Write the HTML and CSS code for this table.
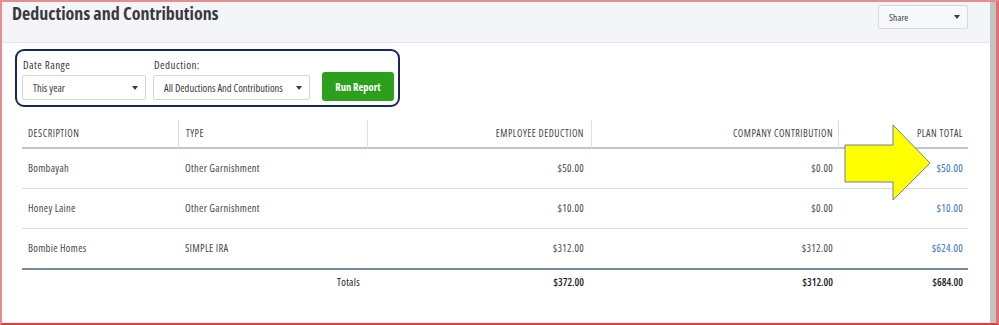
FILE: index.html
```html
<!DOCTYPE html>
<html>
<head>
<meta charset="utf-8">
<link rel="stylesheet" href="styles.css">
</head>
<body>
<div class="frame">
  <div class="main">
    <header class="topbar">
      <h1 class="title">Deductions and Contributions</h1>
      <div class="share">
        <span>Share</span>
        <svg class="caret" width="6" height="4" viewBox="0 0 6 4"><polygon points="0,0 6,0 3,4" fill="#393a3d"/></svg>
      </div>
    </header>
    <section class="content">
      <div class="filters">
        <div class="field">
          <label class="label">Date Range</label>
          <div class="select sel-date">
            <span>This year</span>
            <svg class="caret" width="6" height="4" viewBox="0 0 6 4"><polygon points="0,0 6,0 3,4" fill="#393a3d"/></svg>
          </div>
        </div>
        <div class="field">
          <label class="label">Deduction:</label>
          <div class="select sel-ded">
            <span>All Deductions And Contributions</span>
            <svg class="caret" width="6" height="4" viewBox="0 0 6 4"><polygon points="0,0 6,0 3,4" fill="#393a3d"/></svg>
          </div>
        </div>
        <button class="run">Run Report</button>
      </div>
      <table class="report">
        <colgroup>
          <col class="c-desc"><col class="c-type"><col class="c-emp"><col class="c-comp"><col class="c-plan">
        </colgroup>
        <thead>
          <tr>
            <th class="left">DESCRIPTION</th>
            <th class="left">TYPE</th>
            <th class="right pr8">EMPLOYEE DEDUCTION</th>
            <th class="right">COMPANY CONTRIBUTION</th>
            <th class="right">PLAN TOTAL</th>
          </tr>
        </thead>
        <tbody>
          <tr>
            <td class="left">Bombayah</td>
            <td class="left">Other Garnishment</td>
            <td class="right pr8">$50.00</td>
            <td class="right">$0.00</td>
            <td class="right link">$50.00</td>
          </tr>
          <tr>
            <td class="left">Honey Laine</td>
            <td class="left">Other Garnishment</td>
            <td class="right pr8">$10.00</td>
            <td class="right">$0.00</td>
            <td class="right link">$10.00</td>
          </tr>
          <tr class="last">
            <td class="left">Bombie Homes</td>
            <td class="left">SIMPLE IRA</td>
            <td class="right pr8">$312.00</td>
            <td class="right">$312.00</td>
            <td class="right link">$624.00</td>
          </tr>
        </tbody>
        <tfoot>
          <tr>
            <td></td>
            <td class="right totals-label">Totals</td>
            <td class="right pr8 total">$372.00</td>
            <td class="right total">$312.00</td>
            <td class="right total">$684.00</td>
          </tr>
        </tfoot>
      </table>
    </section>
  </div>
  <div class="scrollbar"></div>
  <svg class="callout" width="92" height="80" viewBox="0 0 92 80">
    <polygon points="2,22 50,22 50,2 87,40 50,77 50,59 2,59" fill="#ffff00" stroke="#6f7fa6" stroke-width="1"/>
  </svg>
</div>
</body>
</html>
```

FILE: styles.css
```css
* { box-sizing: border-box; }

html, body {
  margin: 0;
  padding: 0;
  background: #ffffff;
}

body {
  font-family: "Open Sans", sans-serif;
  font-stretch: 75%;
  color: #393a3d;
}

.frame {
  position: relative;
  width: 999px;
  height: 325px;
  border: 2px solid #e48e8e;
  border-right-width: 3px;
  border-right-color: #e07070;
  border-bottom-color: #e23b3b;
  display: flex;
  overflow: hidden;
}

.main {
  flex: 1;
  display: flex;
  flex-direction: column;
  min-width: 0;
}

.scrollbar {
  width: 6px;
  background: #c4c4c4;
}

/* header */
.topbar {
  height: 41px;
  flex: none;
  background: #f4f5f8;
  border-bottom: 1px solid #e2e4e8;
  display: flex;
  justify-content: space-between;
  align-items: flex-start;
  padding: 0 22px 0 10px;
}

.title {
  margin: 1px 0 0 0;
  font-size: 18px;
  line-height: 21px;
  font-weight: 700;
  color: #393a3d;
}

.share {
  margin-top: 3px;
  width: 90px;
  height: 24px;
  border: 1px solid #d6d9de;
  border-radius: 2px;
  background: #f7f8fa;
  display: flex;
  align-items: center;
  justify-content: space-between;
  padding: 0 7px 0 10px;
  font-size: 9.5px;
  letter-spacing: 0.1px;
  color: #393a3d;
}

.caret { display: block; }

/* content */
.content {
  display: flex;
  flex-direction: column;
  align-items: flex-start;
  padding: 6px 22px 0 13px;
}

.filters {
  display: flex;
  align-items: flex-end;
  border: 2px solid #17295c;
  border-radius: 9px;
  padding: 7px 4px 5px 5px;
}

.field {
  display: flex;
  flex-direction: column;
  margin-right: 7px;
}

.field + .field { margin-right: 12px; }

.label {
  font-size: 11px;
  line-height: 14px;
  height: 14px;
  margin: 0 0 3px 1px;
  letter-spacing: 0.45px;
  color: #393a3d;
}

.select {
  height: 25px;
  border: 1px solid #d3d6db;
  border-radius: 2px;
  background: #ffffff;
  display: flex;
  align-items: center;
  justify-content: space-between;
  padding: 0 7px 0 10px;
  font-size: 10.5px;
  color: #393a3d;
  white-space: nowrap;
}

.sel-date { width: 124px; }
.sel-ded { width: 157px; }

.run {
  width: 72px;
  height: 29px;
  margin: 0 0 -1px 0;
  border: none;
  border-radius: 3px;
  background: #2ca01c;
  color: #ffffff;
  font-family: inherit;
  font-stretch: 75%;
  font-size: 10.5px;
  font-weight: 700;
  padding: 0;
}

/* table */
.report {
  align-self: stretch;
  margin: 13px 0 0 7px;
  border-collapse: separate;
  border-spacing: 0;
  table-layout: fixed;
  width: 946px;
}

.c-desc { width: 156px; }
.c-type { width: 189px; }
.c-emp { width: 224px; }
.c-comp { width: 247px; }
.c-plan { width: 130px; }

.report th {
  font-weight: 400;
  font-size: 10px;
  letter-spacing: 0.5px;
  line-height: 27px;
  padding: 0 6px;
  color: #43454a;
  border-bottom: 2px solid #c0c6d0;
  white-space: nowrap;
}

.report th + th { border-left: 1px solid #dcdfe4; }

.report th.left { padding-left: 6px; }
.report th:nth-child(2) { padding-left: 7px; }
.report th.right { padding-right: 5px; }
.report th.pr8 { padding-right: 7px; }

.report td {
  font-size: 10.5px;
  letter-spacing: 0.3px;
  line-height: 39px;
  padding: 0 6px;
  color: #45474c;
  border-bottom: 1px solid #d9dce1;
  white-space: nowrap;
}

.report td:nth-child(2) { padding-left: 7px; }
.report td.right { padding-right: 5px; }

.report tr.last td { border-bottom: none; }

.report tfoot td {
  border-bottom: none;
  border-top: 2px solid #7e899a;
  line-height: 24px;
  color: #1f2023;
}

.left { text-align: left; }
.right { text-align: right; }
.report td.pr8 { padding-right: 7px; }

.report td.link { color: #2f72b6; }

.report td.totals-label {
  padding-right: 7px;
  font-size: 10.5px;
}

.report td.total {
  font-weight: 600;
  font-size: 10.5px;
  letter-spacing: 0;
  color: #1b1c1f;
}

/* annotation arrow overlay */
.callout {
  position: absolute;
  left: 841px;
  top: 121px;
}
```
